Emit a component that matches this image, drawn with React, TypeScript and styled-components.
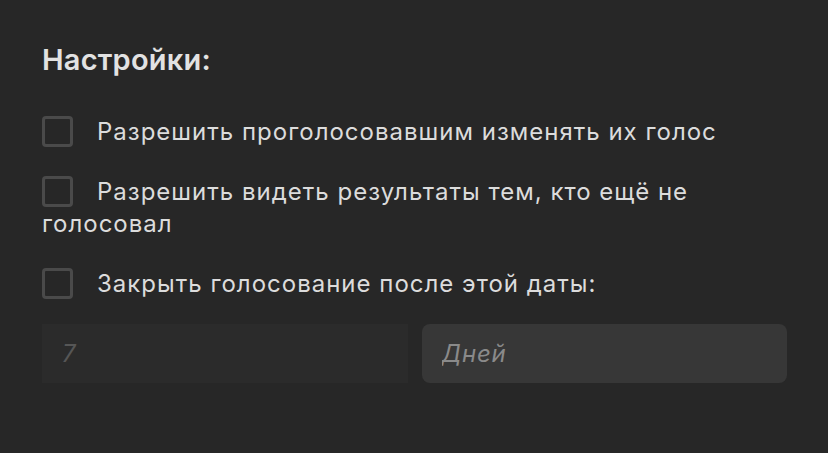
import styled, { createGlobalStyle } from 'styled-components';

const GlobalStyle = createGlobalStyle`
  html, body {
    margin: 0;
    padding: 0;
    background: #272727;
  }
  body {
    font-family: Inter, "Noto Sans", "DejaVu Sans", sans-serif;
    color: #dedede;
  }
`;

const Panel = styled.div`
  box-sizing: border-box;
  width: 828px;
  height: 453px;
  padding: 41px 41px 0 42px;
  background: #272727;
`;

const Title = styled.h3`
  margin: 0 0 37px;
  font-size: 29px;
  font-weight: 600;
  letter-spacing: 0.2px;
  color: #e2e2e2;
  line-height: 38px;
`;

const OptionList = styled.div`
  display: flex;
  flex-direction: column;
  gap: 28px;
`;

const Option = styled.label`
  display: block;
  font-size: 24px;
  line-height: 32px;
  letter-spacing: 1px;
  color: #dcdcdc;
`;

const Box = styled.span`
  display: inline-block;
  box-sizing: border-box;
  width: 31px;
  height: 31px;
  margin-right: 24px;
  border: 3px solid #4a4a4a;
  border-radius: 4px;
  vertical-align: -7px;
`;

const Fields = styled.div`
  display: grid;
  grid-template-columns: 1fr 1fr;
  gap: 14px;
  margin-top: 24px;
`;

const Field = styled.input<{ $filled?: boolean }>`
  box-sizing: border-box;
  width: 100%;
  min-width: 0;
  height: 59px;
  padding: 0 20px;
  border: none;
  outline: none;
  font-family: inherit;
  font-size: 24px;
  font-style: italic;
  letter-spacing: 0.8px;
  color: #dcdcdc;
  background: ${(p) => (p.$filled ? '#373737' : '#2b2b2b')};
  border-radius: ${(p) => (p.$filled ? '8px' : '0')};

  &::placeholder {
    color: ${(p) => (p.$filled ? '#8a8a8a' : '#565656')};
  }
`;

const options = [
  'Разрешить проголосовавшим изменять их голос',
  'Разрешить видеть результаты тем, кто ещё не голосовал',
  'Закрыть голосование после этой даты:',
];

export default function App() {
  return (
    <>
      <GlobalStyle />
      <Panel>
        <Title>Настройки:</Title>
        <OptionList>
          {options.map((text) => (
            <Option key={text}>
              <Box />
              {text}
            </Option>
          ))}
        </OptionList>
        <Fields>
          <Field placeholder="7" />
          <Field $filled placeholder="Дней" />
        </Fields>
      </Panel>
    </>
  );
}
